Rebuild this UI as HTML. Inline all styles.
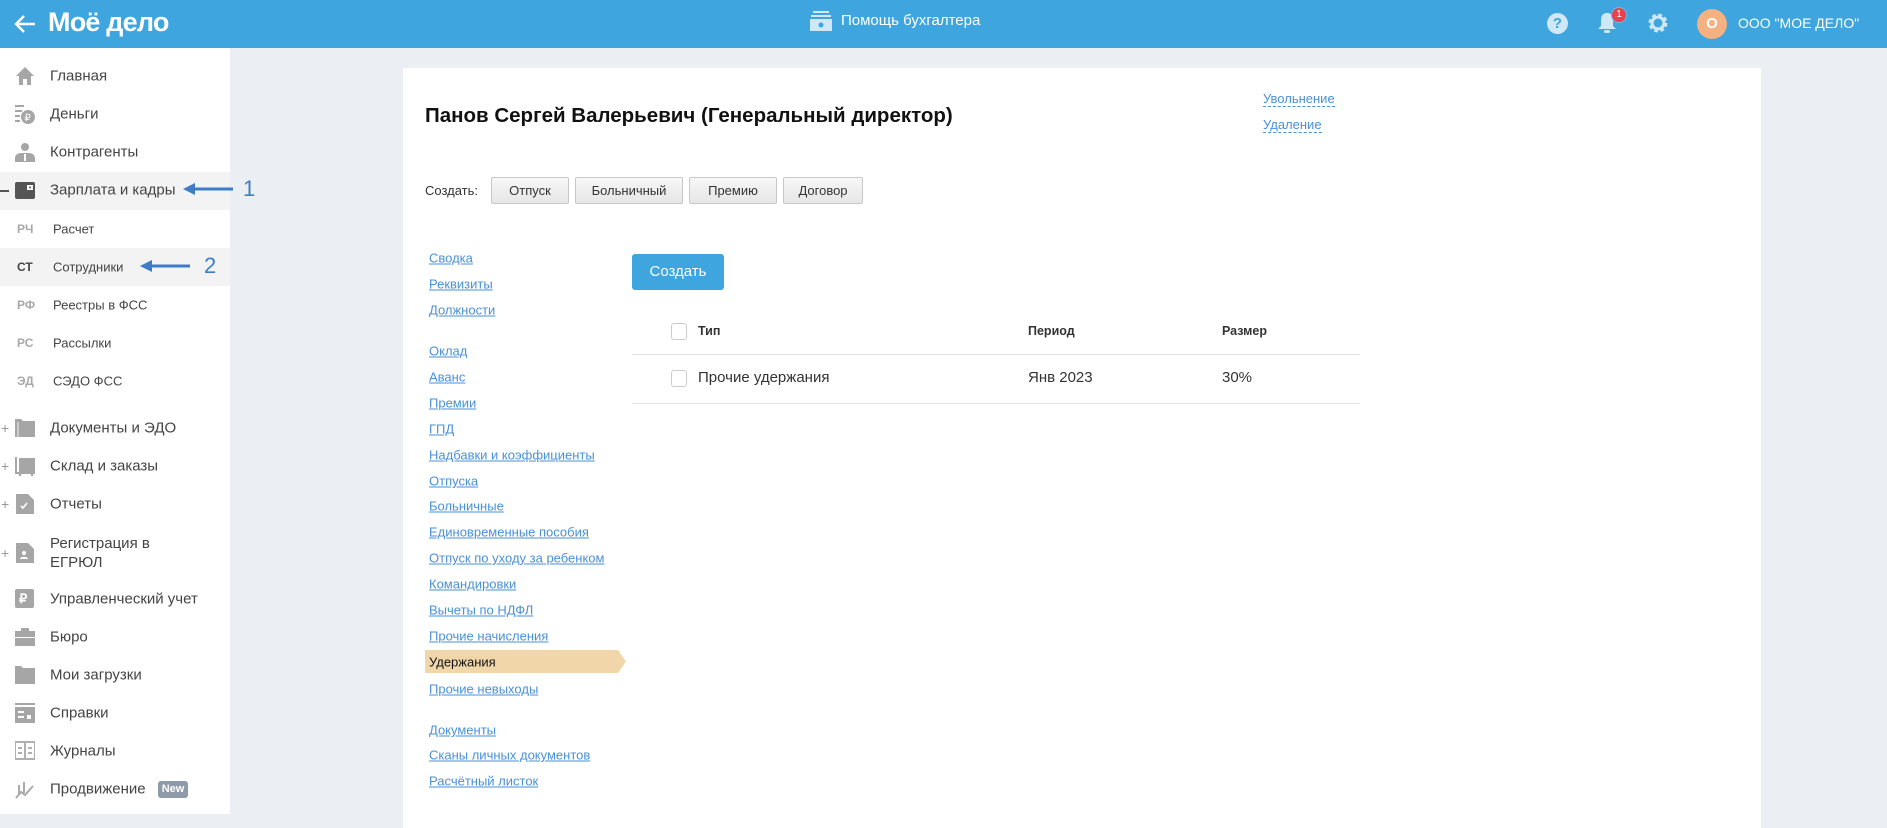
<!DOCTYPE html>
<html><head><meta charset="utf-8">
<style>
*{margin:0;padding:0;box-sizing:border-box}
body{width:1887px;height:814px;overflow:hidden;background:#ebeef2;font-family:"Liberation Sans","Noto Sans CJK SC",sans-serif;position:relative;color:#333}
.a{position:absolute;white-space:nowrap}
#hdr{position:absolute;left:0;top:0;width:1887px;height:48px;background:#3ea5df}
#side{position:absolute;left:0;top:48px;width:230px;height:766px;background:#fff}
.mi{position:absolute;left:50px;font-size:15px;color:#444;transform:translateY(-50%)}
.ic{position:absolute;left:15px;width:20px;height:20px;transform:translateY(-50%)}
.sub{position:absolute;left:53px;font-size:13px;color:#444;transform:translateY(-50%)}
.ab{position:absolute;left:17px;font-size:12px;font-weight:bold;color:#a8a8a8;transform:translateY(-50%)}
.pl{position:absolute;left:1px;font-size:14px;color:#999;transform:translateY(-50%)}
#card{position:absolute;left:403px;top:68px;width:1358px;height:760px;background:#fff}
.lk{position:absolute;left:429px;font-size:13px;color:#4a90d9;text-decoration:underline;transform:translateY(-50%)}
.btn{position:absolute;top:177px;height:27px;background:linear-gradient(#f7f7f7,#e6e6e6);border:1px solid #c8c8c8;border-radius:2px;font-size:13px;color:#333;text-align:center;line-height:25px}
.cb{position:absolute;width:16px;height:17px;border:1px solid #ccc;border-radius:3px;background:#fff}
</style></head><body>
<div id="hdr">
  <svg class="a" style="left:13px;top:13px" width="24" height="22" viewBox="0 0 24 22"><path d="M22 11H3M11 3L3 11l8 8" stroke="#fff" stroke-width="2.4" fill="none"/></svg>
  <div class="a" style="left:48px;top:7px;font-size:27px;color:#fff;font-weight:bold;letter-spacing:-0.8px">Моё дело</div>
  <svg class="a" style="left:810px;top:11px" width="22" height="20" viewBox="0 0 22 20"><rect x="3" y="0" width="16" height="2" fill="#cfe8f7"/><rect x="1" y="4" width="20" height="2" fill="#cfe8f7"/><rect x="0" y="8" width="22" height="12" fill="#cfe8f7"/><circle cx="11" cy="14" r="2.5" fill="#3ea5df"/></svg>
  <div class="a" style="left:841px;top:12px;font-size:15px;color:#fff">Помощь бухгалтера</div>
  <div class="a" style="left:1547px;top:13px;width:21px;height:21px;border-radius:50%;background:#cfe8f7;color:#3ea5df;font-weight:bold;font-size:15px;text-align:center;line-height:21px">?</div>
  <svg class="a" style="left:1597px;top:12px" width="20" height="22" viewBox="0 0 20 22"><path d="M10 1c-4 0-6 3-6 7v6l-3 3h18l-3-3V8c0-4-2-7-6-7z" fill="#cfe8f7"/><rect x="7" y="18" width="6" height="3" rx="1.5" fill="#cfe8f7"/></svg>
  <div class="a" style="left:1612px;top:8px;width:14px;height:14px;border-radius:50%;background:#e8414e;color:#fff;font-size:10px;text-align:center;line-height:14px;box-shadow:0 0 0 1px #6bb8e6">1</div>
  <svg class="a" style="left:1647px;top:12px" width="22" height="22" viewBox="0 0 22 22"><circle cx="11" cy="11" r="7" fill="none" stroke="#cfe8f7" stroke-width="5" stroke-dasharray="3.2 2.3"/><circle cx="11" cy="11" r="6" fill="none" stroke="#cfe8f7" stroke-width="3"/></svg>
  <div class="a" style="left:1697px;top:9px;width:30px;height:30px;border-radius:50%;background:#f6b183;color:#fff;font-weight:bold;font-size:15px;text-align:center;line-height:30px">О</div>
  <div class="a" style="left:1738px;top:15px;font-size:14px;color:#fff">ООО "МОЕ ДЕЛО"</div>
</div>

<div id="side">
  <div class="a" style="left:0;top:124px;width:230px;height:38px;background:#f3f3f3"></div>
  <div class="a" style="left:0;top:200px;width:230px;height:38px;background:#f3f3f3"></div>
</div>
<svg class="a" style="left:15px;top:66px" width="20" height="20" viewBox="0 0 20 20"><path d="M10 1L1 10h3v9h4v-6h4v6h4v-9h3z" fill="#a6a6a6"/></svg>
<div class="mi" style="top:76px">Главная</div>
<svg class="a" style="left:15px;top:104px" width="20" height="20" viewBox="0 0 20 20"><rect x="0" y="1" width="9" height="2" fill="#a6a6a6"/><rect x="0" y="6" width="7" height="2" fill="#a6a6a6"/><rect x="0" y="11" width="5" height="2" fill="#a6a6a6"/><rect x="0" y="16" width="5" height="2" fill="#a6a6a6"/><circle cx="13" cy="13" r="7" fill="#a6a6a6"/><text x="9.5" y="17" font-size="10" fill="#fff" font-family="Liberation Sans">₽</text></svg>
<div class="mi" style="top:114px">Деньги</div>
<svg class="a" style="left:15px;top:142px" width="20" height="20" viewBox="0 0 20 20"><circle cx="10" cy="5" r="4" fill="#a6a6a6"/><path d="M0 20v-4c0-3 3-5 6-5h8c3 0 6 2 6 5v4z" fill="#a6a6a6"/><rect x="9" y="12" width="2" height="7" fill="#fff"/></svg>
<div class="mi" style="top:152px">Контрагенты</div>
<div class="a" style="left:0;top:190px;width:9px;height:2px;background:#555"></div>
<svg class="a" style="left:15px;top:180px" width="20" height="20" viewBox="0 0 20 20"><rect x="0" y="2" width="20" height="17" rx="2" fill="#555"/><rect x="12" y="5" width="6" height="5" fill="#fff"/><circle cx="15" cy="7.5" r="1" fill="#555"/></svg>
<div class="mi" style="top:190px">Зарплата и кадры</div>
<svg class="a" style="left:183px;top:182px" width="50" height="14" viewBox="0 0 50 14"><path d="M0 7l12-6v4.5h38v3H12V13z" fill="#3d7cc7"/></svg>
<div class="a" style="left:243px;top:176px;font-size:22px;color:#3d7cc7">1</div>
<div class="ab" style="top:229px">РЧ</div><div class="sub" style="top:229px">Расчет</div>
<div class="ab" style="top:267px;color:#444">СТ</div><div class="sub" style="top:267px">Сотрудники</div>
<svg class="a" style="left:140px;top:259px" width="50" height="14" viewBox="0 0 50 14"><path d="M0 7l12-6v4.5h38v3H12V13z" fill="#3d7cc7"/></svg>
<div class="a" style="left:204px;top:253px;font-size:22px;color:#3d7cc7">2</div>
<div class="ab" style="top:305px">РФ</div><div class="sub" style="top:305px">Реестры в ФСС</div>
<div class="ab" style="top:343px">РС</div><div class="sub" style="top:343px">Рассылки</div>
<div class="ab" style="top:381px">ЭД</div><div class="sub" style="top:381px">СЭДО ФСС</div>

<div class="pl" style="top:428px">+</div><svg class="ic" style="top:428px" viewBox="0 0 20 20"><path d="M0 1h6l2 2h12v16H0z" fill="#a6a6a6"/><rect x="2" y="4" width="2" height="15" fill="#ccc"/></svg><div class="mi" style="top:428px">Документы и ЭДО</div>
<div class="pl" style="top:466px">+</div><svg class="ic" style="top:466px" viewBox="0 0 20 20"><rect x="0" y="1" width="2" height="16" fill="#a6a6a6"/><rect x="4" y="2" width="16" height="14" fill="#a6a6a6"/><rect x="0" y="16" width="20" height="2" fill="#a6a6a6"/><circle cx="5" cy="19" r="1.3" fill="#a6a6a6"/><circle cx="17" cy="19" r="1.3" fill="#a6a6a6"/></svg><div class="mi" style="top:466px">Склад и заказы</div>
<div class="pl" style="top:504px">+</div><svg class="ic" style="top:504px" viewBox="0 0 20 20"><path d="M1 0h12l6 6v14H1z" fill="#a6a6a6"/><path d="M6 12l2 2 4-5" stroke="#fff" stroke-width="1.6" fill="none"/></svg><div class="mi" style="top:504px">Отчеты</div>
<div class="pl" style="top:553px">+</div><svg class="ic" style="top:553px" viewBox="0 0 20 20"><path d="M1 0h12l6 6v14H1z" fill="#a6a6a6"/><circle cx="9" cy="10" r="2" fill="#fff"/><path d="M5 16c0-3 8-3 8 0z" fill="#fff"/></svg><div class="mi" style="top:553px;line-height:19px">Регистрация в<br>ЕГРЮЛ</div>
<svg class="ic" style="top:599px" viewBox="0 0 20 20"><rect x="0" y="0" width="19" height="19" rx="2" fill="#a6a6a6"/><text x="4" y="14" font-size="13" font-weight="bold" fill="#fff" font-family="Liberation Sans">₽</text></svg><div class="mi" style="top:599px">Управленческий учет</div>
<svg class="ic" style="top:637px" viewBox="0 0 20 20"><rect x="6" y="1" width="8" height="3" fill="#a6a6a6"/><rect x="0" y="4" width="20" height="6" fill="#a6a6a6"/><rect x="0" y="11" width="20" height="8" fill="#a6a6a6"/></svg><div class="mi" style="top:637px">Бюро</div>
<svg class="ic" style="top:675px" viewBox="0 0 20 20"><path d="M0 1h6l2 2h12v16H0z" fill="#a6a6a6"/></svg><div class="mi" style="top:675px">Мои загрузки</div>
<svg class="ic" style="top:713px" viewBox="0 0 20 20"><rect x="0" y="0" width="20" height="2" fill="#a6a6a6"/><rect x="0" y="4" width="20" height="16" fill="#a6a6a6"/><rect x="3" y="8" width="6" height="2" fill="#fff"/><rect x="3" y="13" width="6" height="2" fill="#fff"/><rect x="12" y="12" width="4" height="4" fill="#fff"/></svg><div class="mi" style="top:713px">Справки</div>
<svg class="ic" style="top:751px" viewBox="0 0 20 20"><rect x="0" y="1" width="20" height="17" fill="none" stroke="#b0b0b0" stroke-width="2"/><rect x="9" y="1" width="2" height="17" fill="#b0b0b0"/><rect x="3" y="6" width="4" height="2" fill="#b0b0b0"/><rect x="13" y="6" width="4" height="2" fill="#b0b0b0"/><rect x="3" y="11" width="4" height="2" fill="#b0b0b0"/><rect x="13" y="11" width="4" height="2" fill="#b0b0b0"/></svg><div class="mi" style="top:751px">Журналы</div>
<svg class="a" style="left:15px;top:779px" width="20" height="20" viewBox="0 0 20 20"><path d="M1 19l5-6 4 3 8-9" stroke="#aaa" stroke-width="2" fill="none"/><rect x="3" y="6" width="2" height="10" fill="#aaa"/><rect x="8" y="3" width="2" height="11" fill="#aaa"/></svg>
<div class="mi" style="top:789px">Продвижение</div>
<div class="a" style="left:158px;top:781px;width:30px;height:17px;background:#8e9aaa;border-radius:3px;color:#fff;font-size:11px;font-weight:bold;text-align:center;line-height:17px">New</div>

<div id="card"></div>
<div class="a" style="left:425px;top:104px;font-size:20.5px;font-weight:bold;color:#111">Панов Сергей Валерьевич (Генеральный директор)</div>
<div class="a" style="left:1263px;top:92px;font-size:13px;color:#4a90d9;border-bottom:1px dashed #4a90d9;line-height:14px">Увольнение</div>
<div class="a" style="left:1263px;top:118px;font-size:13px;color:#4a90d9;border-bottom:1px dashed #4a90d9;line-height:14px">Удаление</div>
<div class="a" style="left:425px;top:183px;font-size:13px;color:#333">Создать:</div>
<div class="btn" style="left:491px;width:78px">Отпуск</div>
<div class="btn" style="left:575px;width:108px">Больничный</div>
<div class="btn" style="left:689px;width:88px">Премию</div>
<div class="btn" style="left:783px;width:80px">Договор</div>

<div class="lk" style="top:258px">Сводка</div>
<div class="lk" style="top:284px">Реквизиты</div>
<div class="lk" style="top:310px">Должности</div>
<div class="lk" style="top:351px">Оклад</div>
<div class="lk" style="top:377px">Аванс</div>
<div class="lk" style="top:403px">Премии</div>
<div class="lk" style="top:429px">ГПД</div>
<div class="lk" style="top:455px">Надбавки и коэффициенты</div>
<div class="lk" style="top:481px">Отпуска</div>
<div class="lk" style="top:506px">Больничные</div>
<div class="lk" style="top:532px">Единовременные пособия</div>
<div class="lk" style="top:558px">Отпуск по уходу за ребенком</div>
<div class="lk" style="top:584px">Командировки</div>
<div class="lk" style="top:610px">Вычеты по НДФЛ</div>
<div class="lk" style="top:636px">Прочие начисления</div>
<svg class="a" style="left:425px;top:650px" width="201" height="23" viewBox="0 0 201 23"><path d="M0 0h193l8 11.5-8 11.5H0z" fill="#f0d6a8"/></svg>
<div class="lk" style="top:662px;color:#111;text-decoration:none">Удержания</div>
<div class="lk" style="top:689px">Прочие невыходы</div>
<div class="lk" style="top:730px">Документы</div>
<div class="lk" style="top:755px">Сканы личных документов</div>
<div class="lk" style="top:781px">Расчётный листок</div>

<div class="a" style="left:632px;top:254px;width:92px;height:36px;background:#3ea5df;border-radius:3px;color:#fff;font-size:15px;text-align:center;line-height:36px">Создать</div>
<div class="cb" style="left:671px;top:323px"></div>
<div class="a" style="left:698px;top:324px;font-size:12.5px;font-weight:bold;color:#333">Тип</div>
<div class="a" style="left:1028px;top:324px;font-size:12.5px;font-weight:bold;color:#333">Период</div>
<div class="a" style="left:1222px;top:324px;font-size:12.5px;font-weight:bold;color:#333">Размер</div>
<div class="a" style="left:632px;top:354px;width:728px;height:1px;background:#e3e3e3"></div>
<div class="cb" style="left:671px;top:370px"></div>
<div class="a" style="left:698px;top:369px;font-size:15px;color:#333">Прочие удержания</div>
<div class="a" style="left:1028px;top:369px;font-size:15px;color:#333">Янв 2023</div>
<div class="a" style="left:1222px;top:369px;font-size:15px;color:#333">30%</div>
<div class="a" style="left:632px;top:403px;width:728px;height:1px;background:#e3e3e3"></div>
</body></html>
